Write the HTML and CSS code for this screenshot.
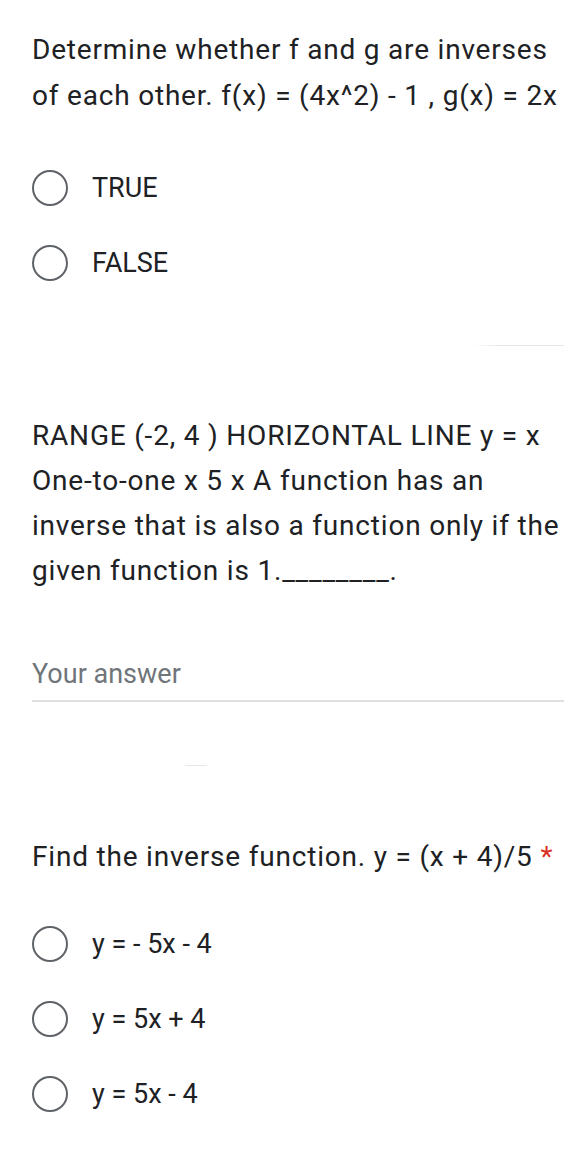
FILE: index.html
```html
<!DOCTYPE html>
<html>
<head>
<meta charset="utf-8">
<link rel="stylesheet" href="styles.css">
</head>
<body>
<div class="page">
  <section class="q q1">
    <div class="title">Determine whether f and g are inverses of each other. f(x) = (4x^2) - 1 , g(x) = 2x</div>
    <div class="options">
      <div class="opt"><span class="radio"></span><span class="label">TRUE</span></div>
      <div class="opt"><span class="radio"></span><span class="label">FALSE</span></div>
    </div>
  </section>
  <div class="edge"></div>
  <section class="q q2">
    <div class="title t2">RANGE (-2, 4 ) HORIZONTAL LINE y = x One-to-one x 5 x A function has an inverse that is also a function only if the given function is 1.________.</div>
    <div class="answer">Your answer</div>
    <div class="mark"></div>
  </section>
  <section class="q q3">
    <div class="title">Find the inverse function. y = (x + 4)/5 <span class="req">*</span></div>
    <div class="options o3">
      <div class="opt"><span class="radio"></span><span class="label">y = - 5x - 4</span></div>
      <div class="opt"><span class="radio"></span><span class="label">y = 5x + 4</span></div>
      <div class="opt"><span class="radio"></span><span class="label">y = 5x - 4</span></div>
    </div>
  </section>
</div>
</body>
</html>
```
FILE: styles.css
```css
html, body {
  margin: 0;
  padding: 0;
  background: #ffffff;
}
body {
  font-family: Roboto, "Liberation Sans", sans-serif;
  color: #202124;
  width: 564px;
  overflow: hidden;
}
.page {
  padding-left: 32px;
}
.title {
  font-size: 28px;
  letter-spacing: 0.8px;
  line-height: 46px;
}
.q1 {
  padding-top: 27px;
}
.options {
  display: flex;
  flex-direction: column;
  margin-top: 31px;
}
.opt {
  display: flex;
  align-items: center;
  height: 75px;
}
.radio {
  box-sizing: border-box;
  width: 36px;
  height: 36px;
  border: 2.5px solid #5f6368;
  border-radius: 50%;
  flex: none;
}
.label {
  margin-left: 24px;
  font-size: 27px;
}
.edge {
  height: 1px;
  margin-top: 45px;
  margin-left: 440px;
  background: linear-gradient(to right, #ffffff, #e6e6e6 30%, #e6e6e6);
}
.q2 {
  padding-top: 67px;
}
.t2 {
  line-height: 45px;
}
.answer {
  margin-top: 65px;
  font-size: 27px;
  color: #70757a;
  padding-bottom: 10px;
  border-bottom: 2px solid #e0e0e0;
}
.mark {
  width: 22px;
  height: 1px;
  margin-left: 153px;
  margin-top: 63px;
  background: #e8e8e8;
}
.q3 {
  padding-top: 68px;
}
.req {
  color: #d93025;
}
.o3 {
  margin-top: 26px;
}
```
